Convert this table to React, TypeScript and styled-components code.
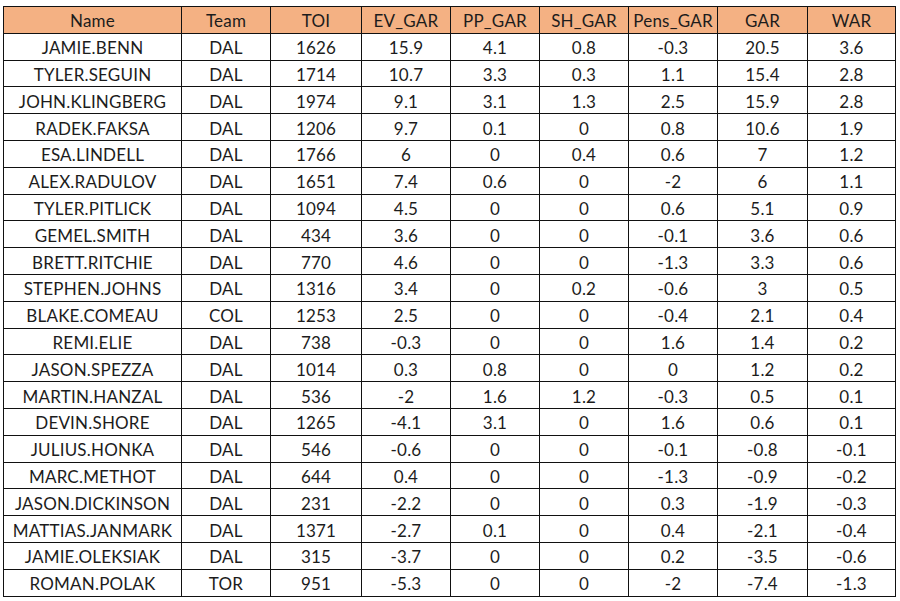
import React from "react";
import styled, { createGlobalStyle } from "styled-components";

const Global = createGlobalStyle`
  html, body { margin: 0; padding: 0; background: #ffffff; }
  body { font-family: Lato, "Open Sans", "Liberation Sans", sans-serif; }
`;

const Page = styled.div`
  padding: 6px 0 0 3px;
  width: 900px;
  height: 601px;
  box-sizing: border-box;
  overflow: hidden;
`;

const Table = styled.table`
  border-collapse: collapse;
  table-layout: fixed;
  width: 893px;
`;

const Col = styled.col<{ $w: number }>`
  width: ${(p) => p.$w}px;
`;

const Row = styled.tr`
  height: 26.8px;
`;

const HeadCell = styled.th`
  background: #f4b183;
  border: 1px solid #111;
  font-weight: 400;
  font-size: 17px;
  letter-spacing: 0.2px;
  color: #1c1c1c;
  text-align: center;
  padding: 2px 0 0;
  line-height: 23px;
`;

const Cell = styled.td`
  border: 1px solid #111;
  font-size: 17px;
  letter-spacing: 0.2px;
  color: #1c1c1c;
  text-align: center;
  padding: 2px 0 0;
  line-height: 23px;
  white-space: nowrap;
`;

const widths = [178, 89, 91, 89, 89, 89, 89, 90, 88];
const headers = ["Name", "Team", "TOI", "EV_GAR", "PP_GAR", "SH_GAR", "Pens_GAR", "GAR", "WAR"];

const rows: (string | number)[][] = [
  ["JAMIE.BENN", "DAL", 1626, "15.9", "4.1", "0.8", "-0.3", "20.5", "3.6"],
  ["TYLER.SEGUIN", "DAL", 1714, "10.7", "3.3", "0.3", "1.1", "15.4", "2.8"],
  ["JOHN.KLINGBERG", "DAL", 1974, "9.1", "3.1", "1.3", "2.5", "15.9", "2.8"],
  ["RADEK.FAKSA", "DAL", 1206, "9.7", "0.1", "0", "0.8", "10.6", "1.9"],
  ["ESA.LINDELL", "DAL", 1766, "6", "0", "0.4", "0.6", "7", "1.2"],
  ["ALEX.RADULOV", "DAL", 1651, "7.4", "0.6", "0", "-2", "6", "1.1"],
  ["TYLER.PITLICK", "DAL", 1094, "4.5", "0", "0", "0.6", "5.1", "0.9"],
  ["GEMEL.SMITH", "DAL", 434, "3.6", "0", "0", "-0.1", "3.6", "0.6"],
  ["BRETT.RITCHIE", "DAL", 770, "4.6", "0", "0", "-1.3", "3.3", "0.6"],
  ["STEPHEN.JOHNS", "DAL", 1316, "3.4", "0", "0.2", "-0.6", "3", "0.5"],
  ["BLAKE.COMEAU", "COL", 1253, "2.5", "0", "0", "-0.4", "2.1", "0.4"],
  ["REMI.ELIE", "DAL", 738, "-0.3", "0", "0", "1.6", "1.4", "0.2"],
  ["JASON.SPEZZA", "DAL", 1014, "0.3", "0.8", "0", "0", "1.2", "0.2"],
  ["MARTIN.HANZAL", "DAL", 536, "-2", "1.6", "1.2", "-0.3", "0.5", "0.1"],
  ["DEVIN.SHORE", "DAL", 1265, "-4.1", "3.1", "0", "1.6", "0.6", "0.1"],
  ["JULIUS.HONKA", "DAL", 546, "-0.6", "0", "0", "-0.1", "-0.8", "-0.1"],
  ["MARC.METHOT", "DAL", 644, "0.4", "0", "0", "-1.3", "-0.9", "-0.2"],
  ["JASON.DICKINSON", "DAL", 231, "-2.2", "0", "0", "0.3", "-1.9", "-0.3"],
  ["MATTIAS.JANMARK", "DAL", 1371, "-2.7", "0.1", "0", "0.4", "-2.1", "-0.4"],
  ["JAMIE.OLEKSIAK", "DAL", 315, "-3.7", "0", "0", "0.2", "-3.5", "-0.6"],
  ["ROMAN.POLAK", "TOR", 951, "-5.3", "0", "0", "-2", "-7.4", "-1.3"],
];

export default function App() {
  return (
    <Page>
      <Global />
      <Table>
        <colgroup>
          {widths.map((w, i) => (
            <Col key={i} $w={w} />
          ))}
        </colgroup>
        <thead>
          <Row>
            {headers.map((h) => (
              <HeadCell key={h}>{h}</HeadCell>
            ))}
          </Row>
        </thead>
        <tbody>
          {rows.map((r, i) => (
            <Row key={i}>
              {r.map((c, j) => (
                <Cell key={j}>{c}</Cell>
              ))}
            </Row>
          ))}
        </tbody>
      </Table>
    </Page>
  );
}
